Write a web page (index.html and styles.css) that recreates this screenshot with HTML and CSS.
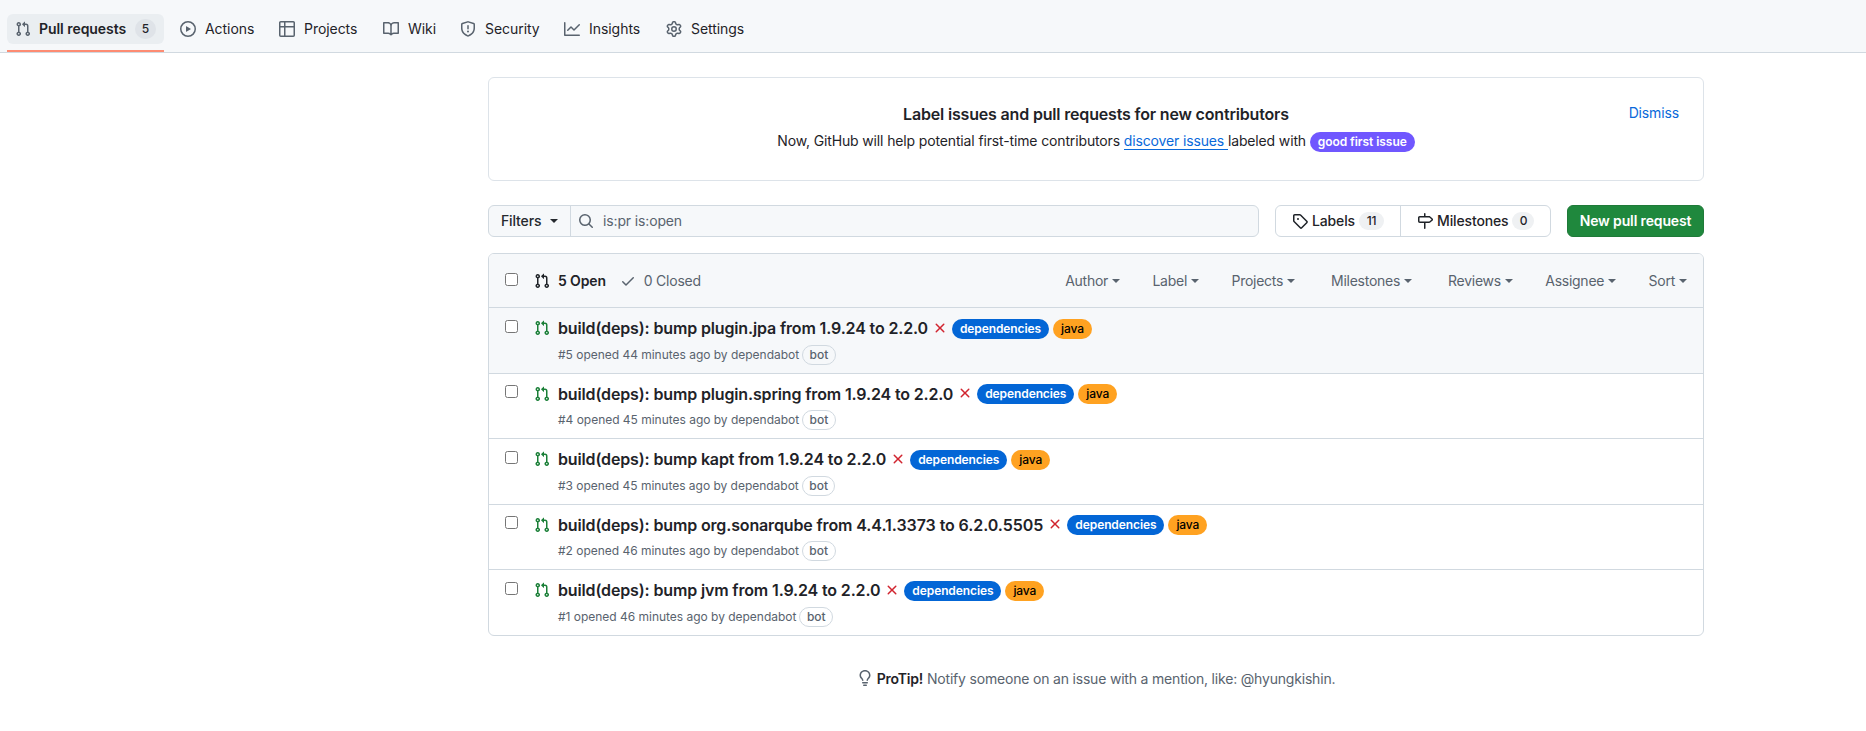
FILE: index.html
```html
<!DOCTYPE html>
<html lang="en">
<head>
<meta charset="utf-8">
<title>Pull requests</title>
<link rel="stylesheet" href="styles.css">
</head>
<body>
<svg class="sprite" width="0" height="0" aria-hidden="true">
  <symbol id="pr" viewBox="0 0 16 16"><path d="M1.5 3.25a2.25 2.25 0 1 1 3 2.122v5.256a2.251 2.251 0 1 1-1.5 0V5.372A2.25 2.25 0 0 1 1.5 3.25Zm5.677-.177L9.573.677A.25.25 0 0 1 10 .854V2.5h1A2.5 2.5 0 0 1 13.5 5v5.628a2.251 2.251 0 1 1-1.5 0V5a1 1 0 0 0-1-1h-1v1.646a.25.25 0 0 1-.427.177L7.177 3.427a.25.25 0 0 1 0-.354ZM3.75 2.5a.75.75 0 1 0 0 1.5.75.75 0 0 0 0-1.5Zm0 9.5a.75.75 0 1 0 0 1.5.75.75 0 0 0 0-1.5Zm8.25.75a.75.75 0 1 0 1.5 0 .75.75 0 0 0-1.5 0Z"/></symbol>
  <symbol id="play" viewBox="0 0 16 16"><path d="M8 0a8 8 0 1 1 0 16A8 8 0 0 1 8 0ZM1.5 8a6.5 6.5 0 1 0 13 0 6.5 6.5 0 0 0-13 0Zm4.879-2.773 4.264 2.559a.25.25 0 0 1 0 .428l-4.264 2.559A.25.25 0 0 1 6 10.559V5.442a.25.25 0 0 1 .379-.215Z"/></symbol>
  <symbol id="table" viewBox="0 0 16 16"><path d="M0 1.75C0 .784.784 0 1.75 0h12.5C15.216 0 16 .784 16 1.75v12.5A1.75 1.75 0 0 1 14.25 16H1.75A1.75 1.75 0 0 1 0 14.25ZM6.5 6.5v8h7.75a.25.25 0 0 0 .25-.25V6.5Zm8-1.5V1.75a.25.25 0 0 0-.25-.25H6.5V5Zm-13 1.5v7.75c0 .138.112.25.25.25H5v-8ZM5 5V1.5H1.75a.25.25 0 0 0-.25.25V5Z"/></symbol>
  <symbol id="book" viewBox="0 0 16 16"><path d="M0 1.75A.75.75 0 0 1 .75 1h4.253c1.227 0 2.317.59 3 1.501A3.743 3.743 0 0 1 11.006 1h4.245a.75.75 0 0 1 .75.75v10.5a.75.75 0 0 1-.75.75h-4.507a2.25 2.25 0 0 0-1.591.659l-.622.621a.75.75 0 0 1-1.06 0l-.622-.621A2.25 2.25 0 0 0 5.258 13H.75a.75.75 0 0 1-.75-.75Zm7.251 10.324.004-5.073-.002-2.253A2.25 2.25 0 0 0 5.003 2.5H1.5v9h3.757a3.75 3.75 0 0 1 1.994.574ZM8.755 4.75l-.004 7.322a3.752 3.752 0 0 1 1.992-.572H14.5v-9h-3.495a2.25 2.25 0 0 0-2.25 2.25Z"/></symbol>
  <symbol id="shield" viewBox="0 0 16 16"><path d="M7.467.133a1.748 1.748 0 0 1 1.066 0l5.25 1.68A1.75 1.75 0 0 1 15 3.48V7c0 1.566-.32 3.182-1.303 4.682-.983 1.498-2.585 2.813-5.032 3.855a1.697 1.697 0 0 1-1.33 0c-2.447-1.042-4.049-2.357-5.032-3.855C1.32 10.182 1 8.566 1 7V3.48a1.75 1.75 0 0 1 1.217-1.667Zm.61 1.429a.25.25 0 0 0-.153 0l-5.25 1.68a.25.25 0 0 0-.174.238V7c0 1.358.275 2.666 1.057 3.86.784 1.194 2.121 2.34 4.366 3.297a.196.196 0 0 0 .154 0c2.245-.956 3.582-2.104 4.366-3.298C13.225 9.666 13.5 8.36 13.5 7V3.48a.251.251 0 0 0-.174-.237l-5.25-1.68ZM8.75 4.75v3a.75.75 0 0 1-1.5 0v-3a.75.75 0 0 1 1.5 0ZM9 10.5a1 1 0 1 1-2 0 1 1 0 0 1 2 0Z"/></symbol>
  <symbol id="graph" viewBox="0 0 16 16"><path d="M1.5 1.75V13.5h13.75a.75.75 0 0 1 0 1.5H.75a.75.75 0 0 1-.75-.75V1.75a.75.75 0 0 1 1.5 0Zm14.28 2.53-5.25 5.25a.75.75 0 0 1-1.06 0L7 7.06 4.28 9.78a.751.751 0 0 1-1.042-.018.751.751 0 0 1-.018-1.042l3.25-3.25a.75.75 0 0 1 1.06 0L10 7.94l4.72-4.72a.751.751 0 0 1 1.042.018.751.751 0 0 1 .018 1.042Z"/></symbol>
  <symbol id="gear" viewBox="0 0 16 16"><path d="M8 0a8.2 8.2 0 0 1 .701.031C9.444.095 9.99.645 10.16 1.29l.288 1.107c.018.066.079.158.212.224.231.114.454.243.668.386.123.082.233.09.299.071l1.103-.303c.644-.176 1.392.021 1.82.63.27.385.506.792.704 1.218.315.675.111 1.422-.364 1.891l-.814.806c-.049.048-.098.147-.088.294.016.257.016.515 0 .772-.01.147.038.246.088.294l.814.806c.475.469.679 1.216.364 1.891a7.977 7.977 0 0 1-.704 1.217c-.428.61-1.176.807-1.82.63l-1.102-.302c-.067-.019-.177-.011-.3.071a5.909 5.909 0 0 1-.668.386c-.133.066-.194.158-.211.224l-.29 1.106c-.168.646-.715 1.196-1.458 1.26a8.006 8.006 0 0 1-1.402 0c-.743-.064-1.289-.614-1.458-1.26l-.289-1.106c-.018-.066-.079-.158-.212-.224a5.738 5.738 0 0 1-.668-.386c-.123-.082-.233-.09-.299-.071l-1.103.303c-.644.176-1.392-.021-1.82-.63a8.12 8.12 0 0 1-.704-1.218c-.315-.675-.111-1.422.363-1.891l.815-.806c.05-.048.098-.147.088-.294a6.214 6.214 0 0 1 0-.772c.01-.147-.038-.246-.088-.294l-.815-.806C.635 6.045.431 5.298.746 4.623a7.92 7.92 0 0 1 .704-1.217c.428-.61 1.176-.807 1.82-.63l1.102.302c.067.019.177.011.3-.071.214-.143.437-.272.668-.386.133-.066.194-.158.211-.224l.29-1.106C6.009.645 6.556.095 7.299.03 7.53.01 7.764 0 8 0Zm-.571 1.525c-.036.003-.108.036-.137.146l-.289 1.105c-.147.561-.549.967-.998 1.189-.173.086-.34.183-.5.29-.417.278-.97.423-1.529.27l-1.103-.303c-.109-.03-.175.016-.195.045-.22.312-.412.644-.573.99-.014.031-.021.11.059.19l.815.806c.411.406.562.957.53 1.456a4.709 4.709 0 0 0 0 .582c.032.499-.119 1.05-.53 1.456l-.815.806c-.081.08-.073.159-.059.19.162.346.353.677.573.989.02.03.085.076.195.046l1.102-.303c.56-.153 1.113-.008 1.53.27.161.107.328.204.501.29.447.222.85.629.997 1.189l.289 1.105c.029.109.101.143.137.146a6.6 6.6 0 0 0 1.142 0c.036-.003.108-.036.137-.146l.289-1.105c.147-.561.549-.967.998-1.189.173-.086.34-.183.5-.29.417-.278.97-.423 1.529-.27l1.103.303c.109.029.175-.016.195-.045.22-.313.411-.644.573-.99.014-.031.021-.11-.059-.19l-.815-.806c-.411-.406-.562-.957-.53-1.456a4.709 4.709 0 0 0 0-.582c-.032-.499.119-1.05.53-1.456l.815-.806c.081-.08.073-.159.059-.19a6.464 6.464 0 0 0-.573-.989c-.02-.03-.085-.076-.195-.046l-1.102.303c-.56.153-1.113.008-1.53-.27a4.44 4.44 0 0 0-.501-.29c-.447-.222-.85-.629-.997-1.189l-.289-1.105c-.029-.11-.101-.143-.137-.146a6.6 6.6 0 0 0-1.142 0ZM11 8a3 3 0 1 1-6 0 3 3 0 0 1 6 0ZM9.5 8a1.5 1.5 0 1 0-3.001.001A1.5 1.5 0 0 0 9.5 8Z"/></symbol>
  <symbol id="search" viewBox="0 0 16 16"><path d="M10.68 11.74a6 6 0 0 1-7.922-8.982 6 6 0 0 1 8.982 7.922l3.04 3.04a.749.749 0 0 1-.326 1.275.749.749 0 0 1-.734-.215ZM11.5 7a4.499 4.499 0 1 0-8.997 0A4.499 4.499 0 0 0 11.5 7Z"/></symbol>
  <symbol id="tag" viewBox="0 0 16 16"><path d="M1 7.775V2.75C1 1.784 1.784 1 2.75 1h5.025c.464 0 .91.184 1.238.513l6.25 6.25a1.75 1.75 0 0 1 0 2.474l-5.026 5.026a1.75 1.75 0 0 1-2.474 0l-6.25-6.25A1.752 1.752 0 0 1 1 7.775Zm1.5 0c0 .066.026.13.073.177l6.25 6.25a.25.25 0 0 0 .354 0l5.025-5.025a.25.25 0 0 0 0-.354l-6.25-6.25a.25.25 0 0 0-.177-.073H2.75a.25.25 0 0 0-.25.25ZM6 5a1 1 0 1 1 0 2 1 1 0 0 1 0-2Z"/></symbol>
  <symbol id="milestone" viewBox="0 0 16 16"><path d="M7.75 0a.75.75 0 0 1 .75.75V3h3.634c.414 0 .814.147 1.13.414l2.07 1.75a1.75 1.75 0 0 1 0 2.672l-2.07 1.75a1.75 1.75 0 0 1-1.13.414H8.5v5.25a.75.75 0 0 1-1.5 0V10H2.75A1.75 1.75 0 0 1 1 8.25v-3.5C1 3.784 1.784 3 2.75 3H7V.75A.75.75 0 0 1 7.75 0Zm4.384 8.5a.25.25 0 0 0 .161-.06l2.07-1.75a.248.248 0 0 0 0-.38l-2.07-1.75a.25.25 0 0 0-.161-.06H2.75a.25.25 0 0 0-.25.25v3.5c0 .138.112.25.25.25h9.384Z"/></symbol>
  <symbol id="check" viewBox="0 0 16 16"><path d="M13.78 4.22a.75.75 0 0 1 0 1.06l-7.25 7.25a.75.75 0 0 1-1.06 0L2.22 9.28a.751.751 0 0 1 .018-1.042.751.751 0 0 1 1.042-.018L6 10.94l6.72-6.72a.75.75 0 0 1 1.06 0Z"/></symbol>
  <symbol id="x" viewBox="0 0 16 16"><path d="M3.72 3.72a.75.75 0 0 1 1.06 0L8 6.94l3.22-3.22a.749.749 0 0 1 1.275.326.749.749 0 0 1-.215.734L9.06 8l3.22 3.22a.749.749 0 0 1-.326 1.275.749.749 0 0 1-.734-.215L8 9.06l-3.22 3.22a.751.751 0 0 1-1.042-.018.751.751 0 0 1-.018-1.042L6.94 8 3.72 4.78a.75.75 0 0 1 0-1.06Z"/></symbol>
  <symbol id="bulb" viewBox="0 0 16 16"><path d="M8 1.5c-2.363 0-4 1.69-4 3.75 0 .984.424 1.625.984 2.304l.214.253c.223.264.47.556.673.848.284.411.537.896.621 1.49a.75.75 0 0 1-1.484.211c-.04-.282-.163-.547-.37-.847a8.456 8.456 0 0 0-.542-.68c-.084-.1-.173-.205-.268-.32C3.201 7.75 2.5 6.766 2.5 5.25 2.5 2.31 4.863 0 8 0s5.5 2.31 5.5 5.25c0 1.516-.701 2.5-1.328 3.259-.095.115-.184.22-.268.319-.207.245-.383.453-.541.681-.208.3-.33.565-.37.847a.751.751 0 0 1-1.485-.212c.084-.593.337-1.078.621-1.489.203-.292.45-.584.673-.848.075-.088.147-.173.213-.253.561-.679.985-1.32.985-2.304 0-2.06-1.637-3.75-4-3.75ZM5.75 12h4.5a.75.75 0 0 1 0 1.5h-4.5a.75.75 0 0 1 0-1.5ZM6 15.25a.75.75 0 0 1 .75-.75h2.5a.75.75 0 0 1 0 1.5h-2.5a.75.75 0 0 1-.75-.75Z"/></symbol>
</svg>

<nav class="nav">
  <a class="tab tab-active"><span class="tab-body"><svg class="icon"><use href="#pr"/></svg><span class="tab-text">Pull requests</span><span class="counter nav-counter">5</span></span></a>
  <a class="tab"><span class="tab-body"><svg class="icon"><use href="#play"/></svg><span class="tab-text">Actions</span></span></a>
  <a class="tab"><span class="tab-body"><svg class="icon"><use href="#table"/></svg><span class="tab-text">Projects</span></span></a>
  <a class="tab"><span class="tab-body"><svg class="icon"><use href="#book"/></svg><span class="tab-text">Wiki</span></span></a>
  <a class="tab"><span class="tab-body"><svg class="icon"><use href="#shield"/></svg><span class="tab-text">Security</span></span></a>
  <a class="tab"><span class="tab-body"><svg class="icon"><use href="#graph"/></svg><span class="tab-text">Insights</span></span></a>
  <a class="tab"><span class="tab-body"><svg class="icon"><use href="#gear"/></svg><span class="tab-text">Settings</span></span></a>
</nav>

<main class="container">
  <section class="banner">
    <a class="dismiss">Dismiss</a>
    <h2 class="banner-title">Label issues and pull requests for new contributors</h2>
    <p class="banner-text">Now, GitHub will help potential first-time contributors <a class="discover">discover issues </a>labeled with <span class="label label-first">good first issue</span></p>
  </section>

  <div class="toolbar">
    <div class="search">
      <button class="filters"><span class="raised">Filters</span><span class="caret"></span></button>
      <div class="query"><svg class="icon"><use href="#search"/></svg><span class="raised">is:pr is:open</span></div>
    </div>
    <div class="subnav">
      <a class="subnav-item subnav-labels"><svg class="icon"><use href="#tag"/></svg><span class="raised">Labels</span><span class="counter counter-wide">11</span></a>
      <a class="subnav-item subnav-milestones"><svg class="icon"><use href="#milestone"/></svg><span class="raised">Milestones</span><span class="counter">0</span></a>
    </div>
    <a class="new-pr">New pull request</a>
  </div>

  <section class="list">
    <header class="list-head">
      <span class="checkbox"></span>
      <span class="state state-open"><svg class="icon"><use href="#pr"/></svg>5 Open</span>
      <span class="state state-closed"><svg class="icon"><use href="#check"/></svg>0 Closed</span>
      <div class="menus">
        <span class="menu">Author<span class="caret"></span></span>
        <span class="menu">Label<span class="caret"></span></span>
        <span class="menu">Projects<span class="caret"></span></span>
        <span class="menu menu-milestones">Milestones<span class="caret"></span></span>
        <span class="menu">Reviews<span class="caret"></span></span>
        <span class="menu">Assignee<span class="caret"></span></span>
        <span class="menu">Sort<span class="caret"></span></span>
      </div>
    </header>
    <article class="row row-focus">
      <span class="checkbox"></span><svg class="icon row-icon"><use href="#pr"/></svg>
      <div class="row-main">
        <div class="row-title"><a class="title">build(deps): bump plugin.jpa from 1.9.24 to 2.2.0</a><svg class="icon fail"><use href="#x"/></svg><span class="label label-deps">dependencies</span><span class="label label-java">java</span></div>
        <div class="meta"><span>#5 opened 44 minutes ago by dependabot</span><span class="bot">bot</span></div>
      </div>
    </article>
    <article class="row">
      <span class="checkbox"></span><svg class="icon row-icon"><use href="#pr"/></svg>
      <div class="row-main">
        <div class="row-title"><a class="title">build(deps): bump plugin.spring from 1.9.24 to 2.2.0</a><svg class="icon fail"><use href="#x"/></svg><span class="label label-deps">dependencies</span><span class="label label-java">java</span></div>
        <div class="meta"><span>#4 opened 45 minutes ago by dependabot</span><span class="bot">bot</span></div>
      </div>
    </article>
    <article class="row">
      <span class="checkbox"></span><svg class="icon row-icon"><use href="#pr"/></svg>
      <div class="row-main">
        <div class="row-title"><a class="title">build(deps): bump kapt from 1.9.24 to 2.2.0</a><svg class="icon fail"><use href="#x"/></svg><span class="label label-deps">dependencies</span><span class="label label-java">java</span></div>
        <div class="meta"><span>#3 opened 45 minutes ago by dependabot</span><span class="bot">bot</span></div>
      </div>
    </article>
    <article class="row">
      <span class="checkbox"></span><svg class="icon row-icon"><use href="#pr"/></svg>
      <div class="row-main">
        <div class="row-title"><a class="title">build(deps): bump org.sonarqube from <span class="version">4.4.1.3373</span> to <span class="version">6.2.0.5505</span></a><svg class="icon fail"><use href="#x"/></svg><span class="label label-deps">dependencies</span><span class="label label-java">java</span></div>
        <div class="meta"><span>#2 opened 46 minutes ago by dependabot</span><span class="bot">bot</span></div>
      </div>
    </article>
    <article class="row">
      <span class="checkbox"></span><svg class="icon row-icon"><use href="#pr"/></svg>
      <div class="row-main">
        <div class="row-title"><a class="title">build(deps): bump jvm from 1.9.24 to 2.2.0</a><svg class="icon fail"><use href="#x"/></svg><span class="label label-deps">dependencies</span><span class="label label-java">java</span></div>
        <div class="meta"><span>#1 opened 46 minutes ago by dependabot</span><span class="bot">bot</span></div>
      </div>
    </article>
  </section>

  <p class="protip"><svg class="icon"><use href="#bulb"/></svg><span><strong>ProTip!</strong> Notify someone on an issue with a mention, like: @hyungkishin.</span></p>
</main>
</body>
</html>
```

FILE: styles.css
```css
* { box-sizing: border-box; }

body {
  margin: 0;
  background: #fff;
  color: #1f2328;
  font: 14px/21px Inter, "Liberation Sans", sans-serif;
  letter-spacing: -0.14px;
}

.sprite { display: block; }
.icon { width: 16px; height: 16px; flex: none; fill: currentColor; display: block; }
.raised { padding-bottom: 1px; }

.nav {
  display: grid;
  grid-template-columns: 157px 91px 96px 69px 96px 94px 95px;
  column-gap: 8px;
  height: 53px;
  padding-left: 7px;
  background: #f6f8fa;
  border-bottom: 1px solid #d1d9e0;
}
.tab { padding: 14px 0 6px; border-bottom: 2px solid transparent; letter-spacing: -0.05px; }
.tab-active { border-bottom-color: #fd8c73; font-weight: 600; }
.tab-body { display: flex; align-items: center; gap: 9px; height: 30px; padding: 0 8px; border-radius: 6px; }
.tab-active .tab-body { gap: 8px; background: #eaeef1; }
.tab .icon { color: #59636e; }
.tab-text { padding-bottom: 1px; white-space: nowrap; }

.counter {
  min-width: 22px;
  height: 18px;
  padding: 0 6px;
  border-radius: 24px;
  background: #eff1f3;
  font-size: 12px;
  font-weight: 500;
  line-height: 18px;
  text-align: center;
}
.counter-wide { min-width: 25px; }
.nav-counter { min-width: 21px; height: 20px; margin-left: auto; line-height: 20px; background: #dfe3e8; }

.container { width: 1216px; margin: 24px 0 0 488px; }

.banner {
  position: relative;
  height: 104px;
  padding-top: 24px;
  border: 1px solid #dde3e9;
  border-radius: 6px;
  text-align: center;
}
.banner-title { margin: 0; font-size: 16px; line-height: 24px; font-weight: 600; letter-spacing: -0.17px; }
.banner-text { margin: 4px 0 0; line-height: 21px; letter-spacing: -0.14px; }
.discover { color: #0969da; border-bottom: 1px solid #0969da; white-space: pre-wrap; }
.dismiss { position: absolute; top: 24px; right: 24px; color: #0969da; }

.label {
  display: inline-block;
  height: 20px;
  padding: 0 8px;
  border-radius: 10px;
  font-size: 12px;
  line-height: 20px;
  font-weight: 600;
  letter-spacing: -0.1px;
  white-space: nowrap;
}
.label-first { background: #7057ff; color: #fff; letter-spacing: -0.06px; }
.label-deps { background: #0366d6; color: #fff; }
.label-java { background: #ffa221; color: #000; font-weight: 500; margin-left: 4px; }

.toolbar { display: flex; gap: 16px; height: 32px; margin-top: 24px; }
.search { display: flex; flex: 1; border: 1px solid #d1d9e0; border-radius: 6px; background: #f6f8fa; }
.filters {
  display: flex; align-items: center; gap: 9px;
  width: 82px; padding: 0 0 0 12px;
  border: 0; border-right: 1px solid #d1d9e0;
  background: none; color: #25292e;
  font: inherit; font-weight: 500; letter-spacing: inherit;
}
.caret { border: 4px solid transparent; border-top-color: currentColor; border-bottom: 0; }
.query { display: flex; align-items: center; gap: 9px; padding-left: 7px; color: #59636e; }
.subnav { display: flex; border: 1px solid #d1d9e0; border-radius: 6px; }
.subnav-item { display: flex; align-items: center; gap: 4px; padding-left: 16px; font-weight: 500; }
.subnav-labels { width: 124px; }
.subnav-milestones { width: 150px; border-left: 1px solid #d1d9e0; }
.new-pr {
  width: 137px;
  border: 1px solid #1f7a39;
  border-radius: 6px;
  background: #1f883d;
  color: #fff;
  font-weight: 600;
  line-height: 30px;
  text-align: center;
}

.list { margin-top: 16px; border: 1px solid #d1d9e0; border-radius: 6px; overflow: hidden; }
.list-head { display: flex; align-items: center; height: 53.4px; padding: 0 16px; background: #f6f8fa; color: #59636e; }
.checkbox { flex: none; width: 13px; height: 13px; border: 1px solid #767676; border-radius: 2.5px; background: #fff; }
.list-head .checkbox { margin: -3px 16px 0 0; }
.state { display: flex; align-items: center; gap: 8px; margin-right: 14px; }
.state-open { color: #1f2328; font-weight: 600; }
.state-closed { letter-spacing: -0.25px; }
.menus { display: flex; gap: 32.4px; margin-left: auto; letter-spacing: -0.26px; }
.menu { display: flex; align-items: center; gap: 4px; }
.menu-milestones { margin: 0 3.5px; }

.row { display: flex; height: 65.5px; padding-left: 16px; border-top: 1px solid #d1d9e0; }
.row-focus { background: #f6f8fa; }
.row .checkbox { margin: 11.4px 16px 0 0; }
.row-icon { margin: 12px 8px 0 0; color: #1a7f37; }
.row-main { padding-top: 8.4px; }
.row-title { display: flex; align-items: center; height: 24px; }
.title { font-size: 16px; font-weight: 600; letter-spacing: -0.145px; white-space: nowrap; }
.version { letter-spacing: -0.04px; }
.fail { margin: -2px 4px 0; color: #d1242f; }
.meta { display: flex; align-items: center; gap: 3px; margin-top: 4px; font-size: 12px; line-height: 20px; color: #59636e; letter-spacing: -0.02px; }
.bot { height: 20px; padding: 0 6.5px; border: 1px solid #d1d9e0; border-radius: 10px; line-height: 18px; font-weight: 500; }

.protip { display: flex; justify-content: center; align-items: center; gap: 4px; margin: 32px 0 0; color: #59636e; letter-spacing: -0.19px; }
.protip strong { color: #1f2328; font-weight: 600; }
```
